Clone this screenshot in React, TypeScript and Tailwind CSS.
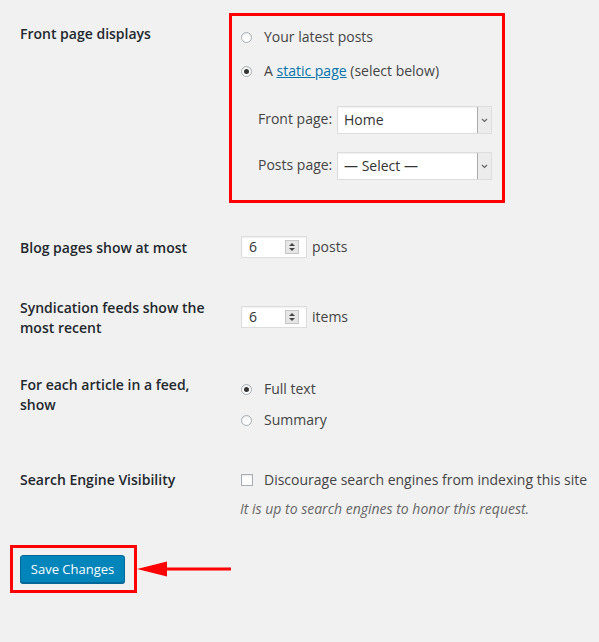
import React from "react";

const font = { fontFamily: '"Open Sans", "Liberation Sans", sans-serif' };

function Radio({ checked }: { checked?: boolean }) {
  return (
    <span className="flex h-[11px] w-[11px] shrink-0 items-center justify-center rounded-full border border-[#a8aeb3] bg-white shadow-[inset_0_1px_2px_rgba(0,0,0,0.1)]">
      {checked && <span className="h-[5px] w-[5px] rounded-full bg-[#333]" />}
    </span>
  );
}

function Select({ value }: { value: string }) {
  return (
    <div className="flex h-[28px] w-[155px] border border-[#ddd] bg-white shadow-[inset_0_1px_2px_rgba(0,0,0,0.07)]">
      <div className="flex-1 pl-[6px] text-[14px] leading-[26px] text-[#333]">{value}</div>
      <div className="flex w-[14px] items-center justify-center border-l border-[#aaa] bg-[#ececec]">
        <svg width="7" height="5" viewBox="0 0 7 5">
          <path d="M1 1 L3.5 3.5 L6 1" fill="none" stroke="#666" strokeWidth="1.2" />
        </svg>
      </div>
    </div>
  );
}

function NumberInput() {
  return (
    <div className="ml-[1px] flex h-[22px] w-[66px] items-center border border-[#ddd] bg-white pl-[7px] pr-[7px] shadow-[inset_0_1px_2px_rgba(0,0,0,0.07)]">
      <span className="flex-1 text-[14px] leading-5 text-[#333]">6</span>
      <span className="flex h-[14px] w-[14px] flex-col items-center justify-center gap-[2px] border border-[#c6c6c6] bg-[#e6e6e6]">
        <svg width="6" height="3" viewBox="0 0 6 3"><path d="M0 3 L3 0 L6 3 Z" fill="#444" /></svg>
        <svg width="6" height="3" viewBox="0 0 6 3"><path d="M0 0 L3 3 L6 0 Z" fill="#444" /></svg>
      </span>
    </div>
  );
}

export default function App() {
  return (
    <div className="min-h-[642px] w-[599px] bg-[#f1f1f1] pl-[20px] text-[14px] leading-5 text-[#444]" style={font}>
      {/* front page */}
      <div className="flex pt-[13px]">
        <div className="w-[209px] shrink-0 pt-[11px] font-semibold text-[#23282d]">Front page displays</div>
        <div className="w-[276px] border-[3px] border-[#f00] pb-[20px] pl-[9px] pt-[11px]">
          <div className="flex items-center gap-[12px]">
            <Radio />
            <span>Your latest posts</span>
          </div>
          <div className="mt-[14px] flex items-center gap-[12px]">
            <Radio checked />
            <span>
              A <a className="text-[#0073aa] underline">static page</a> (select below)
            </span>
          </div>
          <div className="mt-[25px] flex items-center pl-[17px]">
            <span className="w-[79px] -mt-[3px]">Front page:</span>
            <Select value="Home" />
          </div>
          <div className="mt-[18px] flex items-center pl-[17px]">
            <span className="w-[79px] -mt-[3px]">Posts page:</span>
            <Select value="— Select —" />
          </div>
        </div>
      </div>

      {/* blog pages */}
      <div className="mt-[33px] flex">
        <div className="w-[220px] shrink-0 pt-[2px] font-semibold text-[#23282d]">Blog pages show at most</div>
        <div className="flex items-center gap-[5px]">
          <NumberInput />
          <span>posts</span>
        </div>
      </div>

      {/* syndication */}
      <div className="mt-[40px] flex">
        <div className="w-[220px] shrink-0 pr-[20px] font-semibold text-[#23282d]">Syndication feeds show the most recent</div>
        <div className="mt-[8px] flex h-[22px] items-center gap-[5px]">
          <NumberInput />
          <span>items</span>
        </div>
      </div>

      {/* feed article */}
      <div className="mt-[37px] flex">
        <div className="w-[220px] shrink-0 pr-[20px] font-semibold text-[#23282d]">For each article in a feed, show</div>
        <div className="pl-[1px] pt-[4px]">
          <div className="flex items-center gap-[12px]">
            <Radio checked />
            <span>Full text</span>
          </div>
          <div className="mt-[11px] flex items-center gap-[12px]">
            <Radio />
            <span>Summary</span>
          </div>
        </div>
      </div>

      {/* search engine */}
      <div className="mt-[40px] flex">
        <div className="w-[220px] shrink-0 font-semibold text-[#23282d]">Search Engine Visibility</div>
        <div>
          <div className="flex items-center gap-[11px] pl-[1px]">
            <span className="h-[12px] w-[12px] shrink-0 border border-[#a8aeb3] bg-white shadow-[inset_0_1px_2px_rgba(0,0,0,0.1)]" />
            <span>Discourage search engines from indexing this site</span>
          </div>
          <div className="mt-[9px] italic text-[#666]">It is up to search engines to honor this request.</div>
        </div>
      </div>

      {/* save */}
      <div className="-ml-[10px] mt-[26px] flex items-center">
        <div className="border-[3px] border-[#f00] py-[7px] pl-[7px] pr-[9px]">
          <button className="h-[28px] w-[105px] rounded-[3px] border border-[#006799] bg-[#0085ba] text-[13px] text-white shadow-[0_1px_0_#006799]">
            Save Changes
          </button>
        </div>
        <svg width="95" height="16" viewBox="0 0 95 16">
          <path d="M0 8 L30 0.5 L30 15.5 Z" fill="#f00" />
          <rect x="28" y="6.5" width="66" height="3" fill="#f00" />
        </svg>
      </div>
    </div>
  );
}
